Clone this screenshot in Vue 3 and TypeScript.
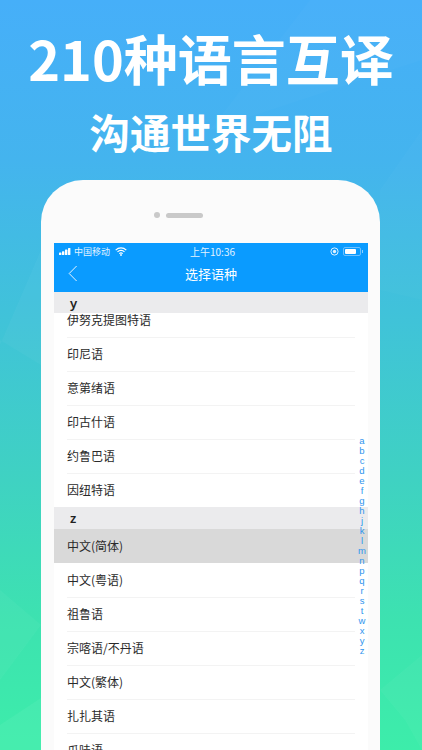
<script setup lang="ts">
const groupY: string[] = ['伊努克提图特语', '印尼语', '意第绪语', '印古什语', '约鲁巴语', '因纽特语']
const groupZ: string[] = ['中文(简体)', '中文(粤语)', '祖鲁语', '宗喀语/不丹语', '中文(繁体)', '扎扎其语', '爪哇语']
const letters: string[] = 'abcdefghjklmnpqrstwxyz'.split('')
</script>

<template>
  <div class="page">
    <svg class="facets" viewBox="0 0 422 750" aria-hidden="true">
      <polygon points="0,345 41,250 41,365 0,340" fill="#fff" opacity="0.03" />
      <polygon points="380,190 422,130 422,300 380,290" fill="#fff" opacity="0.02" />
      <polygon points="0,590 41,625 0,680" fill="#fff" opacity="0.035" />
      <polygon points="0,725 41,698 41,750 0,750" fill="#fff" opacity="0.05" />
      <polygon points="380,690 422,655 422,750 405,720" fill="#fff" opacity="0.03" />
      <polygon points="210,130 310,0 422,0 422,60" fill="#fff" opacity="0.018" />
    </svg>
    <header class="hero">
      <h1 class="headline">210种语言互译</h1>
      <h2 class="subline">沟通世界无阻</h2>
    </header>
    <div class="phone">
      <div class="speaker">
        <span class="camera"></span>
        <span class="grille"></span>
      </div>
      <div class="screen">
        <div class="appbar">
          <div class="status">
            <div class="status-left">
              <svg class="signal" viewBox="0 0 13 7" aria-hidden="true">
                <rect x="0" y="4.5" width="2.4" height="2.5" rx="0.6" />
                <rect x="3" y="3.2" width="2.4" height="3.8" rx="0.6" />
                <rect x="6" y="1.6" width="2.4" height="5.4" rx="0.6" />
                <rect x="9" y="0" width="2.4" height="7" rx="0.6" />
              </svg>
              <span>中国移动</span>
              <svg class="wifi" viewBox="0 0 12 9" aria-hidden="true">
                <path d="M0.7 3.1a7.6 7.6 0 0 1 10.6 0" />
                <path d="M2.5 4.9a5 5 0 0 1 7 0" />
                <path d="M4.3 6.6a2.5 2.5 0 0 1 3.4 0" />
                <circle cx="6" cy="8" r="0.9" class="wifi-dot" />
              </svg>
            </div>
            <span class="clock">上午10:36</span>
            <div class="status-right">
              <svg class="lock" viewBox="0 0 9 9" aria-hidden="true">
                <circle cx="4.5" cy="4.5" r="3.6" />
                <circle cx="4.5" cy="4.5" r="1.7" class="lock-dot" />
              </svg>
              <span class="battery"><span class="charge"></span></span>
              <span class="battery-tip"></span>
            </div>
          </div>
          <div class="nav">
            <svg class="back" viewBox="0 0 10 17" aria-hidden="true">
              <path d="M8.6 1 1.2 8.5l7.4 7.5" />
            </svg>
            <span class="title">选择语种</span>
          </div>
        </div>
        <div class="section-head">y</div>
        <div class="group group-clipped">
          <div v-for="name in groupY" :key="name" class="row">
            <span class="row-text">{{ name }}</span>
          </div>
        </div>
        <div class="section-head section-z">z</div>
        <div class="group">
          <div
            v-for="(name, i) in groupZ"
            :key="name"
            class="row"
            :class="{ selected: i === 0 }"
          >
            <span class="row-text">{{ name }}</span>
          </div>
        </div>
        <div class="index">
          <span v-for="l in letters" :key="l" class="letter">{{ l }}</span>
        </div>
      </div>
    </div>
  </div>
</template>

<style>
html,
body {
  margin: 0;
  padding: 0;
  overflow: hidden;
}
</style>

<style scoped>
.page {
  position: relative;
  width: 422px;
  height: 750px;
  overflow: hidden;
  background: linear-gradient(180deg, #46aff9 0, #44b4ee 160px, #40c2da 310px, #3fd2c2 480px, #3de2b0 620px, #3dedaa 750px);
  font-family: "Noto Sans CJK SC", "Noto Sans", sans-serif;
  display: flex;
  flex-direction: column;
  align-items: flex-start;
}
.facets {
  position: absolute;
  inset: 0;
  width: 422px;
  height: 750px;
}
.hero {
  position: relative;
  flex: none;
  height: 180px;
  width: 100%;
  color: #fff;
  text-align: center;
}
.headline {
  margin: 0;
  padding-top: 20px;
  font-size: 54px;
  line-height: 76px;
  font-weight: 700;
  white-space: nowrap;
}
.subline {
  margin: 0;
  padding-top: 16px;
  font-size: 40.5px;
  line-height: 40px;
  font-weight: 700;
  white-space: nowrap;
}
.phone {
  position: relative;
  width: 339px;
  height: 570px;
  margin-left: 41px;
  flex: none;
  box-sizing: border-box;
  padding: 0 12px 0 13px;
  background: #fbfbfb;
  border-radius: 42px 42px 0 0;
}
.speaker {
  height: 63px;
  display: flex;
  align-items: center;
  justify-content: flex-start;
  gap: 6px;
  padding-left: 100px;
  padding-top: 7px;
  box-sizing: border-box;
}
.camera {
  width: 6px;
  height: 6px;
  border-radius: 50%;
  background: #c9c9c9;
}
.grille {
  width: 37px;
  height: 5px;
  border-radius: 3px;
  background: #c9c9c9;
}
.screen {
  position: relative;
  background: #fff;
  height: 507px;
  overflow: hidden;
}
.appbar {
  background: #0a9bff;
  height: 49px;
  color: #fff;
}
.status {
  height: 17px;
  padding: 0 5px;
  display: flex;
  align-items: center;
  justify-content: space-between;
  position: relative;
  font-size: 9px;
  line-height: 17px;
  color: #e3f3ff;
}
.status-left {
  display: flex;
  align-items: center;
  gap: 3px;
}
.signal {
  width: 13px;
  height: 7px;
  fill: #fff;
  margin-right: -1px;
}
.wifi {
  width: 12px;
  height: 9px;
  margin-left: 2px;
  fill: none;
  stroke: #fff;
  stroke-width: 1.2;
}
.wifi-dot {
  fill: #fff;
  stroke: none;
}
.clock {
  position: absolute;
  left: 136px;
  top: 0;
  font-size: 10px;
  white-space: nowrap;
}
.status-right {
  display: flex;
  align-items: center;
}
.lock {
  width: 9px;
  height: 9px;
  margin-right: 4px;
  fill: none;
  stroke: #dff1ff;
  stroke-width: 1;
}
.lock-dot {
  fill: #dff1ff;
  stroke: none;
}
.battery {
  box-sizing: border-box;
  width: 18px;
  height: 9px;
  padding: 1px;
  border: 1px solid #6cc0ff;
  border-radius: 2px;
  display: block;
}
.charge {
  display: block;
  width: 11px;
  height: 5px;
  background: #fff;
  border-radius: 1px;
}
.battery-tip {
  width: 1px;
  height: 3px;
  margin-left: 1px;
  background: #8fd0ff;
}
.nav {
  position: relative;
  height: 32px;
  display: flex;
  align-items: center;
  justify-content: center;
}
.back {
  position: absolute;
  left: 14px;
  top: 5px;
  width: 10px;
  height: 17px;
  fill: none;
  stroke: #e8f5ff;
  stroke-width: 1;
}
.title {
  font-size: 13px;
  line-height: 20px;
  margin-top: -4px;
  color: #fff;
}
.section-head {
  position: relative;
  z-index: 1;
  height: 21px;
  background: #ebebed;
  padding-left: 16px;
  font-size: 13px;
  line-height: 22px;
  color: #222;
  font-family: "Noto Sans", sans-serif;
  font-weight: 600;
}
.section-z {
  height: 22px;
}
.group {
  overflow: hidden;
}
.group-clipped {
  margin-top: -10px;
}
.row {
  height: 34px;
  padding: 0 13px;
  display: flex;
}
.row-text {
  flex: 1;
  border-top: 1px solid #f3f3f3;
  font-size: 12px;
  line-height: 32px;
  color: #2a2a2a;
  white-space: nowrap;
}
.row.selected .row-text {
  border-top-color: transparent;
}
.row.selected {
  background: #d9d9d9;
}
.row.selected + .row .row-text {
  border-top-color: transparent;
}
.index {
  position: absolute;
  z-index: 2;
  right: 0;
  top: 193px;
  width: 12px;
  display: flex;
  flex-direction: column;
  align-items: center;
  color: #2f95ee;
  font-size: 9.5px;
  line-height: 10px;
  font-family: "Liberation Sans", sans-serif;
}
.letter {
  height: 10px;
}
</style>
